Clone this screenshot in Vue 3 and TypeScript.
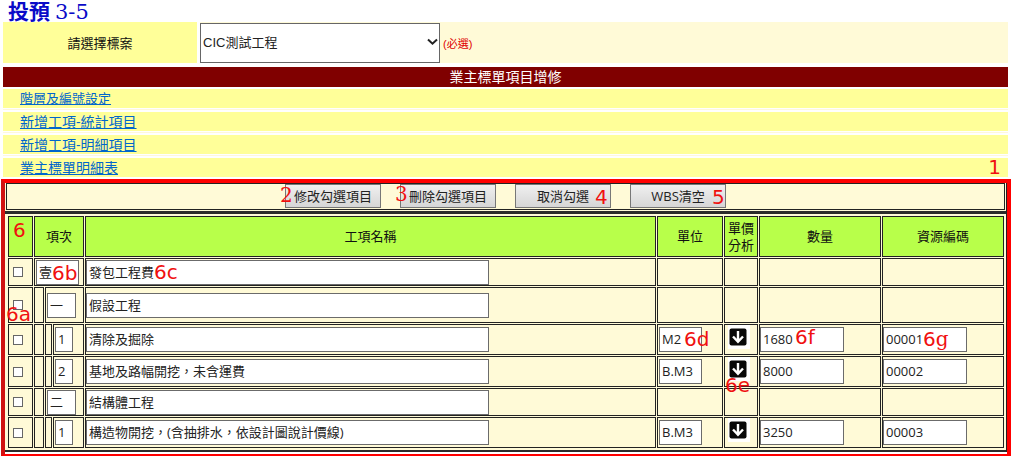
<script setup lang="ts">
import { ref } from 'vue'

interface WorkItem {
  level: 1 | 2 | 3
  checked: boolean
  no: string
  name: string
  tall?: boolean
  unit?: string
  qty?: string
  code?: string
  marks?: Partial<Record<'check' | 'no' | 'name' | 'unit' | 'detail' | 'qty' | 'code', string>>
}

const project = ref('CIC測試工程')
const projects = ['CIC測試工程']

const links = ['階層及編號設定', '新增工項-統計項目', '新增工項-明細項目', '業主標單明細表']

const items = ref<WorkItem[]>([
  { level: 1, checked: false, no: '壹', name: '發包工程費', marks: { no: '6b', name: '6c' } },
  { level: 2, checked: false, no: '一', name: '假設工程', tall: true, marks: { check: '6a' } },
  { level: 3, checked: false, no: '1', name: '清除及掘除', unit: 'M2', qty: '1680', code: '00001', marks: { unit: '6d', qty: '6f', code: '6' } },
  { level: 3, checked: false, no: '2', name: '基地及路幅開挖，未含運費', unit: 'B.M3', qty: '8000', code: '00002', marks: { detail: '6e' } },
  { level: 2, checked: false, no: '二', name: '結構體工程' },
  { level: 3, checked: false, no: '1', name: '構造物開挖，(含抽排水，依設計圖說計價線)', unit: 'B.M3', qty: '3250', code: '00003' },
])

function clearChecks() {
  items.value.forEach((item) => (item.checked = false))
}

function removeChecked() {
  items.value = items.value.filter((item) => !item.checked)
}

function clearAll() {
  items.value = []
}
</script>

<template>
  <main class="page">
    <h1 class="title">投預<span class="title-no">3-5</span></h1>

    <div class="picker">
      <label class="picker-label" for="project">請選擇標案</label>
      <div class="picker-field">
        <div class="select-wrap">
          <select id="project" v-model="project">
            <option v-for="p in projects" :key="p">{{ p }}</option>
          </select>
          <svg class="chevron" width="11" height="8" viewBox="0 0 11 8" aria-hidden="true">
            <path d="M1 1.5 L5.5 5.7 L10 1.5" fill="none" stroke="#222" stroke-width="2" />
          </svg>
        </div>
        <span class="required">(必選)</span>
      </div>
    </div>

    <h2 class="banner">業主標單項目增修</h2>

    <ul class="links">
      <li v-for="(link, i) in links" :key="link">
        <div class="link-row">
          <a href="#" :class="{ small: i === 0 }">{{ link }}</a>
          <span v-if="i === 3" class="mark m1">1</span>
        </div>
      </li>
    </ul>

    <section class="frame">
      <div class="sheet">
        <div class="toolbar">
          <div class="tool"><button type="button">修改勾選項目</button><span class="mark serif m2">2</span></div>
          <div class="tool"><button type="button" @click="removeChecked">刪除勾選項目</button><span class="mark serif m3">3</span></div>
          <div class="tool"><button type="button" @click="clearChecks">取消勾選</button><span class="mark m4">4</span></div>
          <div class="tool"><button type="button" @click="clearAll">WBS清空</button><span class="mark m5">5</span></div>
        </div>

        <div class="grid">
          <table>
            <colgroup>
              <col class="c-check" /><col class="c-in1" /><col class="c-in2" /><col class="c-in3" />
              <col /><col class="c-unit" /><col class="c-detail" /><col class="c-qty" /><col class="c-code" />
            </colgroup>
            <thead>
              <tr>
                <th><span class="mark m6">6</span></th>
                <th colspan="3">項次</th>
                <th>工項名稱</th>
                <th>單位</th>
                <th>單價<br />分析</th>
                <th>數量</th>
                <th>資源編碼</th>
              </tr>
            </thead>
            <tbody>
              <tr v-for="(item, i) in items" :key="i" :class="{ detailed: item.level === 3, tall: item.tall }">
                <td class="check">
                  <input v-model="item.checked" type="checkbox" :aria-label="'勾選 ' + item.name" />
                  <span v-if="item.marks?.check" class="mark m6a">{{ item.marks.check }}</span>
                </td>
                <td v-for="n in item.level - 1" :key="n"></td>
                <td class="inset" :colspan="4 - item.level">
                  <input v-model="item.no" type="text" :class="'no-' + item.level" aria-label="項次" />
                  <span v-if="item.marks?.no" class="mark m6b">{{ item.marks.no }}</span>
                </td>
                <td>
                  <input v-model="item.name" type="text" class="name" aria-label="工項名稱" />
                  <span v-if="item.marks?.name" class="mark m6c">{{ item.marks.name }}</span>
                </td>
                <td class="inset">
                  <input v-if="item.unit" v-model="item.unit" type="text" class="unit" aria-label="單位" />
                  <span v-if="item.marks?.unit" class="mark m6d">{{ item.marks.unit }}</span>
                </td>
                <td class="detail">
                  <button v-if="item.unit" type="button" class="arrow" aria-label="單價分析">
                    <svg width="22" height="24" viewBox="0 0 22 24" aria-hidden="true">
                      <rect width="22" height="24" fill="#fff" />
                      <rect x="1.5" y="3.5" width="17" height="17" rx="2" fill="#080808" />
                      <path d="M10 6 V17 M5 11.5 L10 16.8 L15 11.5" fill="none" stroke="#fff" stroke-width="2.4" />
                    </svg>
                  </button>
                  <span v-if="item.marks?.detail" class="mark m6e">{{ item.marks.detail }}</span>
                </td>
                <td>
                  <input v-if="item.qty" v-model="item.qty" type="text" class="num" aria-label="數量" />
                  <span v-if="item.marks?.qty" class="mark m6f">{{ item.marks.qty }}</span>
                </td>
                <td>
                  <input v-if="item.code" v-model="item.code" type="text" class="num" aria-label="資源編碼" />
                  <span v-if="item.marks?.code" class="mark m6g">{{ item.marks.code }}<span class="serif">g</span></span>
                </td>
              </tr>
            </tbody>
          </table>
        </div>
      </div>
    </section>
  </main>
</template>

<style>
body {
  margin: 0;
  background: #fff;
}
</style>

<style scoped>
.page,
.page input,
.page button {
  font-family: "Open Sans", "Noto Sans CJK TC", sans-serif;
  font-size: 13px;
}
.page {
  color: #111;
}
.page * {
  box-sizing: border-box;
}
.title {
  height: 22px;
  margin: 0 8px;
  font: bold 21px/24px "Liberation Serif", "Noto Sans CJK TC", serif;
  color: #0a0ac8;
}
.title-no {
  margin-left: 5px;
  font: 21px/24px "DejaVu Serif", serif;
}
.picker {
  display: flex;
  gap: 3px;
  height: 41px;
  margin: 0 3px;
}
.picker-label {
  flex: 0 0 194px;
  display: flex;
  align-items: center;
  justify-content: center;
  background: #ffff99;
}
.picker-field {
  flex: 1;
  display: flex;
  align-items: center;
  gap: 3px;
  background: #fffad7;
}
.select-wrap {
  position: relative;
  align-self: flex-end;
}
.select-wrap select {
  display: block;
  width: 240px;
  height: 40px;
  padding: 0 20px 2px 2px;
  border: 1px solid #666;
  border-radius: 0;
  background: #fff;
  color: #222;
  appearance: none;
  font: 13px "Liberation Sans", "Noto Sans CJK TC", sans-serif;
}
.chevron {
  position: absolute;
  right: 2px;
  top: 15px;
  pointer-events: none;
}
.required {
  font: 11px "Liberation Sans", "Noto Sans CJK TC", sans-serif;
  color: #e00000;
}
.banner {
  height: 20px;
  margin: 4px 3px 2px;
  background: #800000;
  color: #fff;
  font-size: 14px;
  font-weight: 400;
  line-height: 20px;
  text-align: center;
}
.links {
  margin: 0 3px;
  padding: 0;
  list-style: none;
}
.links li + li {
  margin-top: 1px;
  border-top: 1px solid #fff8dc;
  padding-top: 2px;
}
.link-row {
  position: relative;
  height: 19px;
  padding-left: 17px;
  background: #ffff99;
  line-height: 19px;
}
.link-row a {
  color: #0066cc;
  font-size: 14px;
}
.link-row a.small {
  font-size: 13px;
}
.frame {
  margin: 2px 0 0 1px;
  border: 4px solid #ff0000;
  border-left-color: #d01212;
  border-bottom-width: 2px;
  padding-bottom: 2px;
}
.sheet {
  border-right: 1px solid #222;
  background: #fffad7;
}
.toolbar {
  display: flex;
  justify-content: center;
  gap: 19px;
  height: 27px;
  margin: 0 1px;
  border: 1px solid #222;
}
.tool {
  position: relative;
}
.tool button {
  display: block;
  width: 96px;
  height: 24px;
  padding: 0;
  border: 1px solid #777;
  border-radius: 0;
  background: linear-gradient(#f0f0f0, #d6d6d6);
  color: #222;
  line-height: 20px;
  white-space: nowrap;
}
.grid {
  margin-top: 1px;
  border: solid #2b2b2b;
  border-width: 3px 0 2px;
  padding: 1px 1px 1px 2px;
}
table {
  width: 100%;
  table-layout: fixed;
  border-collapse: separate;
  border-spacing: 1px;
}
.c-check { width: 25px; }
.c-in1 { width: 10px; }
.c-in2 { width: 7px; }
.c-in3 { width: 31px; }
.c-unit { width: 66px; }
.c-detail { width: 34px; }
.c-qty { width: 122px; }
.c-code { width: 122px; }
th,
td {
  position: relative;
  padding: 0;
  border: 1px solid #222;
  vertical-align: middle;
}
th {
  height: 41px;
  background: #b8ff4a;
  font-weight: 400;
  line-height: 17px;
}
td {
  height: 28px;
}
.detailed td {
  height: 31px;
}
.tall td {
  height: 36px;
}
td.inset {
  padding-left: 1px;
}
input[type="checkbox"] {
  display: block;
  width: 10px;
  height: 10px;
  margin: 0 0 0 4px;
  border: 1px solid #666;
  background: #fff;
  appearance: none;
}
input[type="checkbox"]:checked {
  background: #333;
}
input[type="text"] {
  display: block;
  height: 25px;
  padding: 0 2px 2px;
  border: 1px solid #6b6b6b;
  border-radius: 0;
  background: #fff;
  color: #222;
}
input.no-1,
input.unit {
  width: 43px;
}
input.no-2 {
  width: 29px;
}
input.no-3 {
  width: 18px;
}
input.name {
  width: 403px;
}
input.num {
  width: 84px;
}
td.detail {
  padding-left: 3px;
  vertical-align: top;
}
.arrow {
  display: block;
  padding: 0;
  border: 0;
  background: none;
}
.arrow svg {
  display: block;
}
.mark {
  position: absolute;
  z-index: 1;
  color: #f01010;
  font: 20px/20px "DejaVu Sans", sans-serif;
  pointer-events: none;
}
.mark.serif,
.mark .serif {
  font-family: "DejaVu Serif", serif;
}
.m1 { right: 7px; top: -1px; }
.m2 { left: -5px; top: 1px; }
.m3 { left: -5px; top: 0; }
.m4 { left: 80px; top: 3px; }
.m5 { left: 82px; top: 3px; }
.m6 { left: 4px; top: 3px; }
.m6a { left: -3px; top: 16px; }
.m6b { left: 17px; top: 4px; }
.m6c { left: 68px; top: 3px; }
.m6d { left: 26px; top: 4px; }
.m6e { left: 0; top: 18px; }
.m6f { left: 35px; top: 2px; }
.m6g { left: 40px; top: 4px; }
</style>
